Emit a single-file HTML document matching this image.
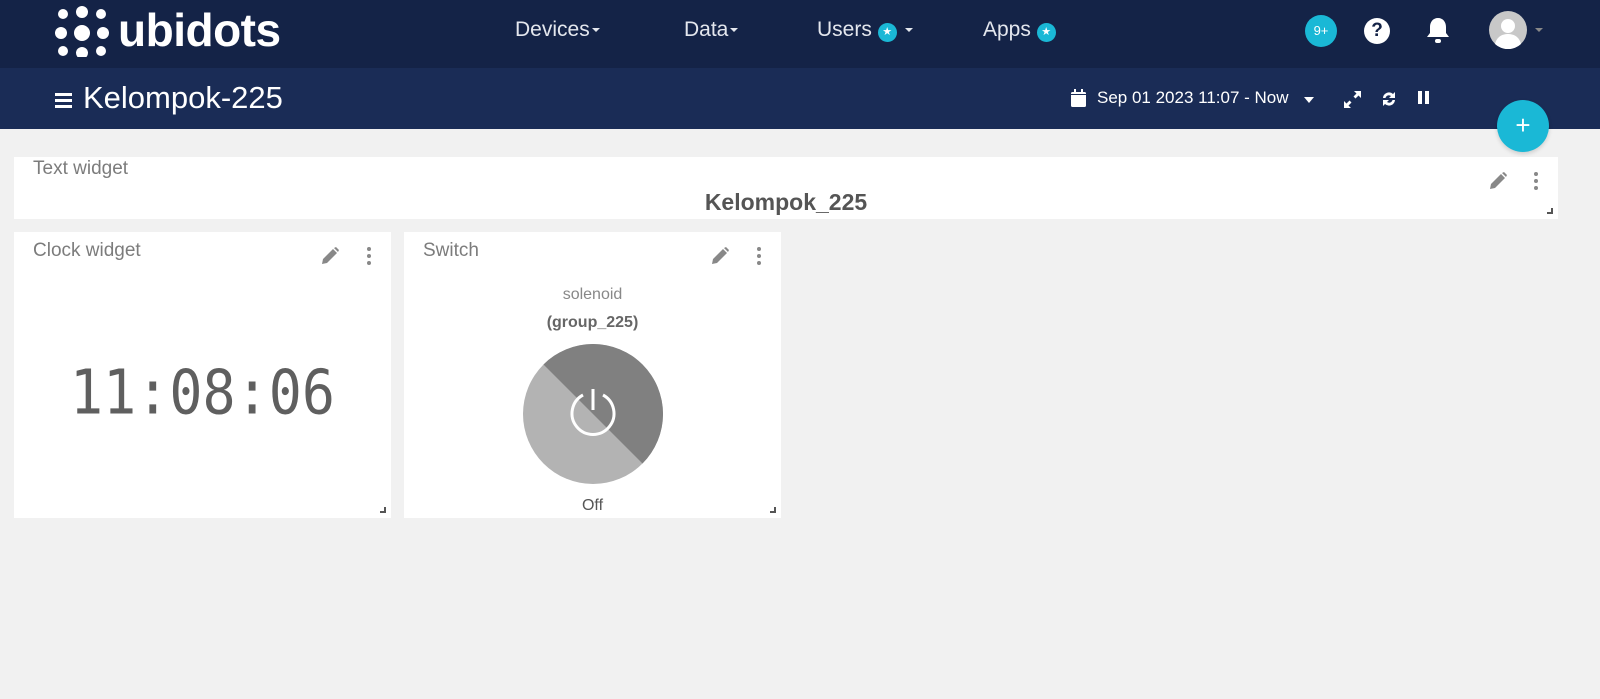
<!DOCTYPE html>
<html><head><meta charset="utf-8"><style>
*{box-sizing:border-box;margin:0;padding:0}
body{width:1600px;height:699px;background:#f1f1f1;font-family:"Liberation Sans",sans-serif;position:relative;overflow:hidden}
.top{position:absolute;left:0;top:0;width:1600px;height:68px;background:#142347}
.sub{position:absolute;left:0;top:68px;width:1600px;height:61px;background:#1a2c56}
.abs{position:absolute}
.nav{color:#e4e7ee;font-size:21px;top:18px}
.star{display:inline-block;width:19px;height:19px;border-radius:50%;background:#1ab8d6;vertical-align:1px;color:#fff;font-size:11px;text-align:center;line-height:19px}
.caret{display:inline-block;width:0;height:0;border-left:4px solid transparent;border-right:4px solid transparent;border-top:4px solid #e4e7ee;vertical-align:4px;margin-left:2px}
.card{position:absolute;background:#fff}
.ttl{position:absolute;left:19px;top:8px;font-size:19px;color:#7c7c7c}
.rz{position:absolute;right:5px;bottom:5px;width:6px;height:6px;border-right:2px solid #555;border-bottom:2px solid #555}
</style></head><body>
<div class="top"></div><div class="sub"></div>
<svg class="abs" style="left:55px;top:5px" width="56" height="52" viewBox="0 0 56 52">
<g fill="#fff"><circle cx="8" cy="9" r="5"/><circle cx="27" cy="7" r="6"/><circle cx="46" cy="9" r="5"/>
<circle cx="6" cy="28" r="6"/><circle cx="27" cy="28" r="8"/><circle cx="48" cy="28" r="6"/>
<circle cx="8" cy="46" r="5"/><circle cx="27" cy="48" r="6"/><circle cx="46" cy="46" r="5"/></g></svg>
<div class="abs" style="left:118px;top:3px;color:#fff;font-size:46px;font-weight:bold;letter-spacing:-0.5px">ubidots</div>
<div class="abs nav" style="left:515px">Devices<span class="caret"></span></div>
<div class="abs nav" style="left:684px">Data<span class="caret"></span></div>
<div class="abs nav" style="left:817px">Users <span class="star">★</span> <span class="caret"></span></div>
<div class="abs nav" style="left:983px">Apps <span class="star">★</span></div>
<div class="abs" style="left:1305px;top:15px;width:32px;height:32px;border-radius:50%;background:#1ab8d6;color:#fff;font-size:13px;text-align:center;line-height:32px">9+</div>
<div class="abs" style="left:1364px;top:18px;width:26px;height:26px;border-radius:50%;background:#fff;color:#142347;font-weight:bold;font-size:19px;text-align:center;line-height:26px">?</div>
<svg class="abs" style="left:1425px;top:16px" width="26" height="30" viewBox="0 0 26 30"><path d="M13 2c-5 0-8 4-8 9v6l-3 4h22l-3-4v-6c0-5-3-9-8-9z" fill="#fff"/><rect x="10" y="23" width="6" height="4" rx="2" fill="#fff"/></svg>
<svg class="abs" style="left:1489px;top:11px" width="38" height="38" viewBox="0 0 38 38"><circle cx="19" cy="19" r="19" fill="#c8c8c8"/><circle cx="19" cy="15" r="7" fill="#fff"/><path d="M6 33c2-8 8-10 13-10s11 2 13 10a19 19 0 0 1-26 0z" fill="#fff"/></svg>
<div class="abs" style="left:1535px;top:28px;border-left:4px solid transparent;border-right:4px solid transparent;border-top:4px solid #888"></div>
<div class="abs" style="left:55px;top:93px;width:17px"><div style="height:3px;background:#fff;margin-bottom:3px"></div><div style="height:3px;background:#fff;margin-bottom:3px"></div><div style="height:3px;background:#fff"></div></div>
<div class="abs" style="left:83px;top:80px;color:#fff;font-size:31px">Kelompok-225</div>
<svg class="abs" style="left:1071px;top:89px" width="15" height="18" viewBox="0 0 15 18"><rect x="0" y="3" width="15" height="15" rx="1.5" fill="#fff"/><rect x="3" y="0" width="2" height="4" fill="#fff"/><rect x="10" y="0" width="2" height="4" fill="#fff"/><rect x="0" y="5" width="15" height="1" fill="#1a2c56"/></svg>
<div class="abs" style="left:1097px;top:88px;color:#fff;font-size:17px">Sep 01 2023 11:07 - Now</div>
<div class="abs" style="left:1304px;top:97px;border-left:5px solid transparent;border-right:5px solid transparent;border-top:6px solid #fff"></div>
<svg class="abs" style="left:1343px;top:90px" width="19" height="19" viewBox="0 0 19 19"><path d="M11 1h7v7l-2.5-2.5-3 3-2-2 3-3zM8 18H1v-7l2.5 2.5 3-3 2 2-3 3z" fill="#fff"/></svg>
<svg class="abs" style="left:1380px;top:90px" width="18" height="18" viewBox="0 0 18 18"><path d="M3 8a6 6 0 0 1 10-4l2-2v6h-6l2-2a3.5 3.5 0 0 0-5.5 2zM15 10a6 6 0 0 1-10 4l-2 2v-6h6l-2 2a3.5 3.5 0 0 0 5.5-2z" fill="#fff"/></svg>
<div class="abs" style="left:1418px;top:91px;width:4px;height:13px;background:#fff"></div>
<div class="abs" style="left:1425px;top:91px;width:4px;height:13px;background:#fff"></div>
<div class="abs" style="left:1497px;top:100px;width:52px;height:52px;border-radius:50%;background:#1ab8d6;color:#fff;font-size:26px;text-align:center;line-height:50px;box-shadow:0 2px 4px rgba(0,0,0,.15)">+</div>
<div class="card" style="left:14px;top:157px;width:1544px;height:62px">
<div class="ttl" style="top:1px">Text widget</div>
<div class="abs" style="left:0;width:100%;top:32px;text-align:center;font-size:23px;font-weight:bold;color:#555">Kelompok_225</div>
<svg class="abs" style="left:1474px;top:14px" width="20" height="20" viewBox="0 0 20 20"><path d="M2 18l1-5 10-10 4 4-10 10zM14 2l2-1 3 3-1 2z" fill="#888"/></svg>
<div class="abs" style="left:1520px;top:15px;width:4px;height:4px;border-radius:50%;background:#888;box-shadow:0 7px #888,0 14px #888"></div>
<div class="rz"></div></div>
<div class="card" style="left:14px;top:232px;width:377px;height:286px">
<div class="ttl">Clock widget</div>
<svg class="abs" style="left:306px;top:14px" width="20" height="20" viewBox="0 0 20 20"><path d="M2 18l1-5 10-10 4 4-10 10zM14 2l2-1 3 3-1 2z" fill="#888"/></svg>
<div class="abs" style="left:353px;top:15px;width:4px;height:4px;border-radius:50%;background:#888;box-shadow:0 7px #888,0 14px #888"></div>
<div class="abs" style="left:0;width:100%;top:128px;text-align:center;font-family:'DejaVu Sans Mono','Liberation Mono',monospace;font-size:55px;color:#5f5f5f;transform:scaleY(1.12)">11:08:06</div>
<div class="rz"></div></div>
<div class="card" style="left:404px;top:232px;width:377px;height:286px">
<div class="ttl">Switch</div>
<svg class="abs" style="left:306px;top:14px" width="20" height="20" viewBox="0 0 20 20"><path d="M2 18l1-5 10-10 4 4-10 10zM14 2l2-1 3 3-1 2z" fill="#888"/></svg>
<div class="abs" style="left:353px;top:15px;width:4px;height:4px;border-radius:50%;background:#888;box-shadow:0 7px #888,0 14px #888"></div>
<div class="abs" style="left:0;width:100%;top:54px;text-align:center;font-size:16px;color:#888">solenoid</div>
<div class="abs" style="left:0;width:100%;top:82px;text-align:center;font-size:16px;font-weight:bold;color:#666">(group_225)</div>
<svg class="abs" style="left:119px;top:112px" width="140" height="140" viewBox="0 0 140 140">
<circle cx="70" cy="70" r="70" fill="#b3b3b3"/>
<path d="M20.5 20.5A70 70 0 0 1 119.5 119.5z" fill="#808080"/>
<path d="M60 51a21 21 0 1 0 20 0" fill="none" stroke="#fff" stroke-width="3"/>
<line x1="70" y1="45" x2="70" y2="66" stroke="#fff" stroke-width="3"/></svg>
<div class="abs" style="left:0;width:100%;top:265px;text-align:center;font-size:16px;color:#555">Off</div>
<div class="rz"></div></div>
</body></html>
